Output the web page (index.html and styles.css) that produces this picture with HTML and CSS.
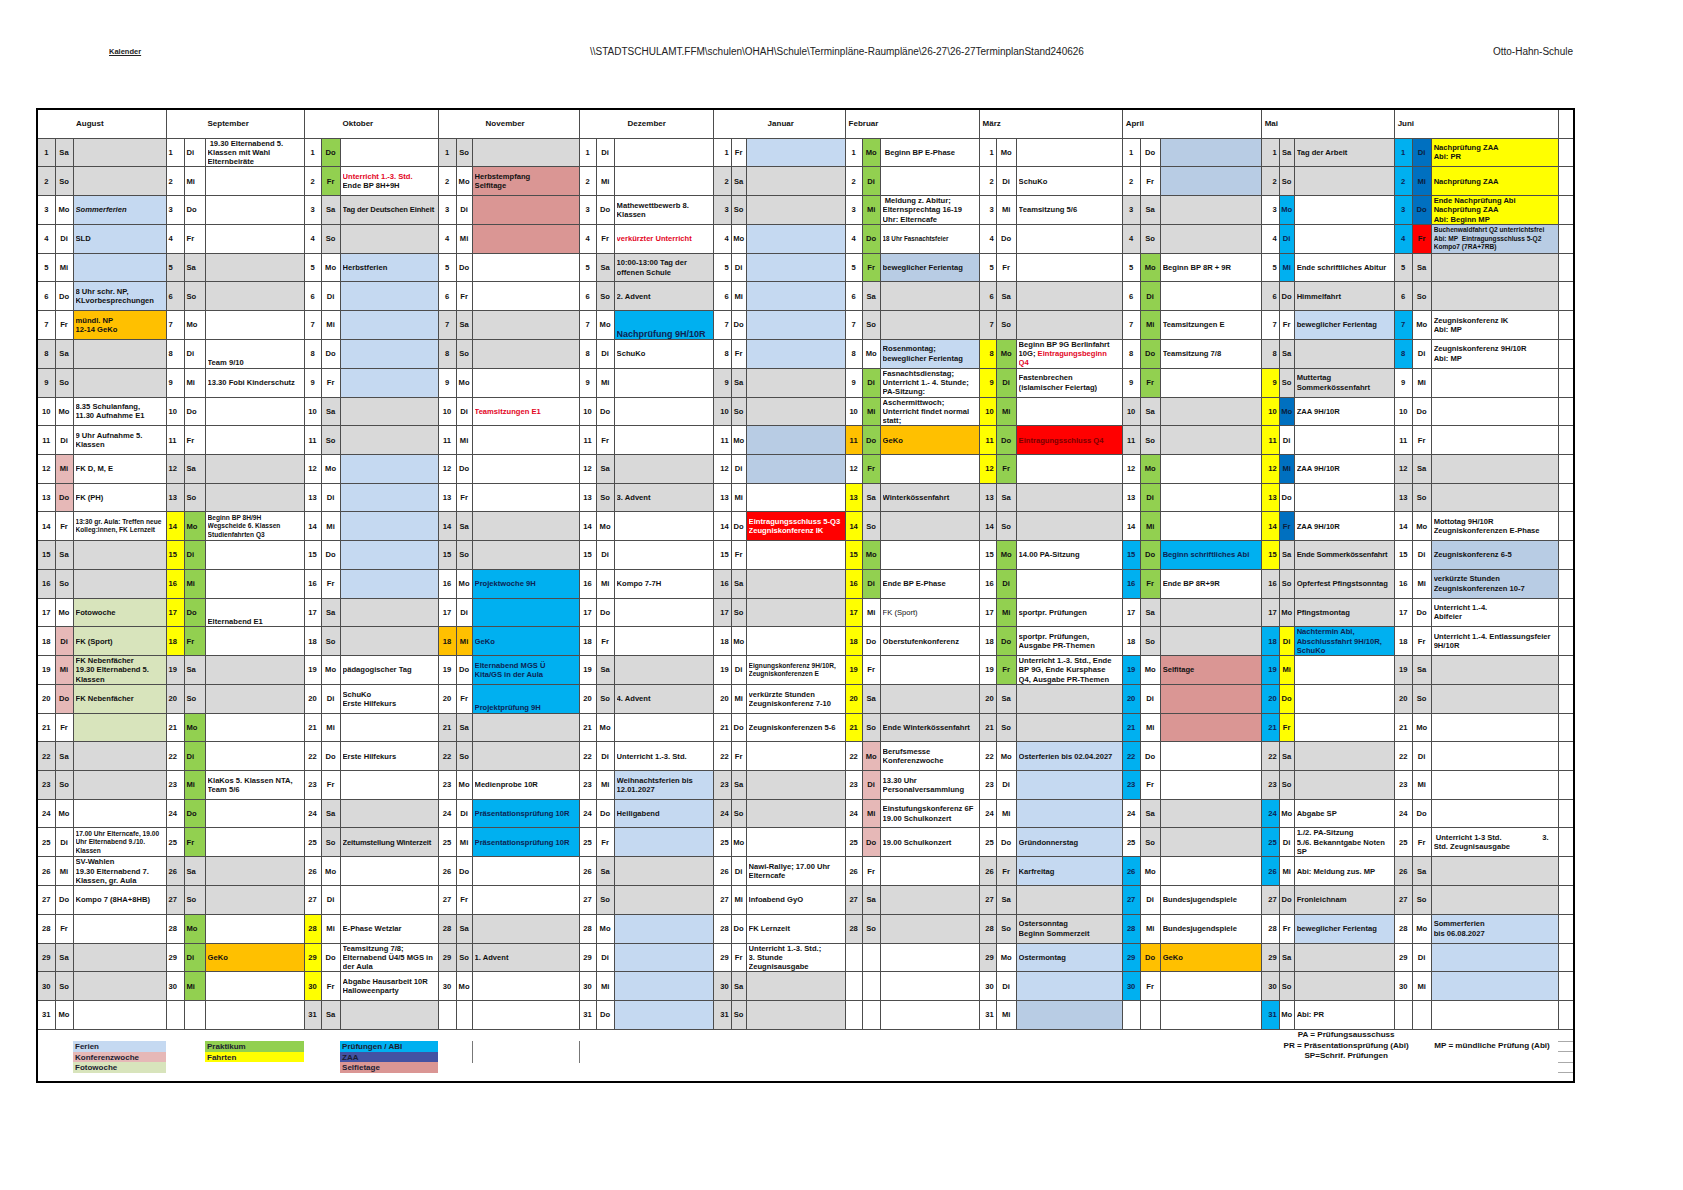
FILE: index.html
```html
<!DOCTYPE html>
<html lang="de">
<head>
<meta charset="utf-8">
<title>Terminplan 26-27</title>
<link rel="stylesheet" href="styles.css">
</head>
<body>
<div class="topbar">
  <div class="kal">Kalender</div>
  <div class="path">\\STADTSCHULAMT.FFM\schulen\OHAH\Schule\Terminpläne-Raumpläne\26-27\26-27TerminplanStand240626</div>
  <div class="school">Otto-Hahn-Schule</div>
</div>
<table class="cal" id="cal">
  <tfoot>
    <tr class="leg">
      <td colspan="2"></td>
      <td><div class="legstack"><div class="legitem bg-ferien">Ferien</div><div class="legitem bg-konf">Konferenzwoche</div><div class="legitem bg-foto">Fotowoche</div></div></td>
      <td colspan="2"></td>
      <td><div class="legstack"><div class="legitem bg-prakt">Praktikum</div><div class="legitem bg-fahrt">Fahrten</div></div></td>
      <td colspan="2"></td>
      <td><div class="legstack"><div class="legitem bg-pruef">Prüfungen / ABI</div><div class="legitem bg-zaaleg">ZAA</div><div class="legitem bg-selfie">Selfietage</div></div></td>
      <td colspan="2"></td>
      <td><div class="vline"></div></td>
      <td><div class="vline"></div></td>
      <td colspan="14"></td>
      <td colspan="5"><div class="notes">PA = Prüfungsausschuss<br>PR = Präsentationsprüfung (Abi)<br>SP=Schrif. Prüfungen</div></td>
      <td><div class="mp">MP = mündliche Prüfung (Abi)</div></td>
      <td><div class="ticks"><div class="tick first"></div><div class="tick"></div><div class="tick"></div><div class="tick"></div></div></td>
    </tr>
  </tfoot>
</table>
<script>
const DAYS = ["So", "Mo", "Di", "Mi", "Do", "Fr", "Sa"];
const BG = {
  W: "bg-white", G: "bg-wkend", B: "bg-ferien", b: "bg-steel", P: "bg-konf",
  S: "bg-selfie", g: "bg-prakt", Y: "bg-fahrt", O: "bg-geko", C: "bg-pruef",
  Z: "bg-zaa", R: "bg-red", F: "bg-foto"
};

const M = [
  { n: "August", y: 2026, m: 7, w: [18, 18, 93], na: "c", da: "c", hp: 38,
    num: "GGWWWWW|GGWWWWW|GGWWWWW|GGWWWWW|GGW",
    day: "GGWWWWW|GGWWPPW|GGWPPPW|GGWWWWW|GGW",
    txt: "GGBBBBO|GGWWWWW|GGFFFFF|GGWWWWW|GGW",
    t: {
      3: ["Sommerferien", "it"], 4: ["SLD"],
      6: ["8 Uhr schr. NP,<br>KLvorbesprechungen"],
      7: ["mündl. NP<br>12-14 GeKo"],
      10: ["8.35 Schulanfang,<br>11.30 Aufnahme E1"],
      11: ["9 Uhr Aufnahme 5.<br>Klassen"],
      12: ["FK D, M, E"], 13: ["FK (PH)"],
      14: ["13:30 gr. Aula: Treffen neue<br>Kolleg:innen, FK Lernzeit", "sm"],
      17: ["Fotowoche"], 18: ["FK (Sport)"],
      19: ["FK Nebenfächer<br>19.30 Elternabend 5.<br>Klassen"],
      20: ["FK Nebenfächer"],
      25: ["17.00 Uhr Elterncafe, 19.00<br>Uhr Elternabend 9./10.<br>Klassen", "sm"],
      26: ["SV-Wahlen<br>19.30 Elternabend 7.<br>Klassen, gr. Aula"],
      27: ["Kompo 7 (8HA+8HB)"]
    } },
  { n: "September", y: 2026, m: 8, w: [18, 21, 99], na: "l", da: "l", hp: 41,
    num: "WWWWGGW|WWWWGGY|YYYYGGW|WWWWGGW|WWW",
    day: "WWWWGGW|WWWWGGg|ggggGGg|ggggGGg|ggW",
    txt: "WWWWGGW|WWWWGGW|WWWWGGW|WWWWGGW|OWW",
    t: {
      1: ["&nbsp;19.30 Elternabend 5.<br>Klassen mit Wahl<br>Elternbeiräte"],
      8: ["Team 9/10", "bot"],
      9: ["13.30 Fobi Kinderschutz"],
      14: ["Beginn BP 8H/9H<br>Wegscheide 6. Klassen<br>Studienfahrten Q3", "sm"],
      17: ["Elternabend E1", "bot"],
      23: ["KlaKos 5. Klassen NTA,<br>Team 5/6"],
      29: ["GeKo"]
    } },
  { n: "Oktober", y: 2026, m: 9, w: [17, 19, 98], na: "c", da: "c", hp: 38,
    num: "WWWWWWW|WWWWWWW|WWWWWWW|WWWWWWY|YYG",
    day: "ggGGWWW|WWGGWWW|WWGGWWW|WWGGWWW|WWG",
    txt: "WWGGBBB|BBGGBBB|BBGGWWW|WWGGWWW|WWG",
    t: {
      2: ['<span class="red">Unterricht 1.-3. Std.</span><br>Ende BP 8H+9H'],
      3: ["Tag der Deutschen Einheit", "tight"],
      5: ["Herbstferien"],
      19: ["pädagogischer Tag"],
      20: ["SchuKo<br>Erste Hilfekurs"],
      22: ["Erste Hilfekurs"],
      25: ["Zeitumstellung Winterzeit", "tight"],
      28: ["E-Phase Wetzlar"],
      29: ["Teamsitzung 7/8;<br>Elternabend Ü4/5 MGS in<br>der Aula"],
      30: ["Abgabe Hausarbeit 10R<br>Halloweenparty"]
    } },
  { n: "November", y: 2026, m: 10, w: [18, 16, 107], na: "c", da: "c", hp: 47,
    num: "GWWWWWG|GWWWWWG|GWWOWWG|GWWWWWG|GWW",
    day: "GWWWWWG|GWWWWWG|GWWOWWG|GWWWWWG|GWW",
    txt: "GSSSWWG|GWWWWWG|GCCCCCG|GWCCWWG|GWW",
    t: {
      2: ["Herbstempfang<br>Selfitage"],
      10: ["Teamsitzungen E1", "rd"],
      16: ["Projektwoche 9H"],
      18: ["GeKo"],
      19: ["Elternabend MGS Ü<br>Kita/GS in der Aula"],
      20: ["Projektprüfung 9H", "bot"],
      23: ["Medienprobe 10R"],
      24: ["Präsentationsprüfung 10R"],
      25: ["Präsentationsprüfung 10R"],
      29: ["1. Advent"]
    } },
  { n: "Dezember", y: 2026, m: 11, w: [17, 18, 99], na: "c", da: "c", hp: 48,
    num: "WWWWWWW|WWWWWWW|WWWWWWW|WWWWWWW|WWW",
    day: "WWWWGGW|WWWWGGW|WWWWGGW|WWWWGGW|WWW",
    txt: "WWWWGGC|WWWWGGW|WWWWGGW|WBBBGGB|BBB",
    t: {
      3: ["Mathewettbewerb 8.<br>Klassen"],
      4: ["verkürzter Unterricht", "rd"],
      5: ["10:00-13:00 Tag der<br>offenen Schule"],
      6: ["2. Advent"],
      7: ["Nachprüfung 9H/10R", "bot lg"],
      8: ["SchuKo"],
      13: ["3. Advent"],
      16: ["Kompo 7-7H"],
      20: ["4. Advent"],
      22: ["Unterricht 1.-3. Std."],
      23: ["Weihnachtsferien bis<br>12.01.2027"],
      24: ["Heiligabend"]
    } },
  { n: "Januar", y: 2027, m: 0, w: [18, 15, 99], na: "r", da: "c", hp: 54,
    num: "WGGWWWW|WGGWWWW|WGGWWWW|WGGWWWW|WGG",
    day: "WGGWWWW|WGGWWWW|WGGWWWW|WGGWWWW|WGG",
    txt: "BGGBBBB|BGGbbWR|WGGWWWW|WGGWWWW|WGG",
    t: {
      14: ["Eintragungsschluss 5-Q3<br>Zeugniskonferenz IK", "wt"],
      19: ["Eignungskonferenz 9H/10R,<br>Zeugniskonferenzen E", "sm"],
      20: ["verkürzte Stunden<br>Zeugniskonferenz 7-10"],
      21: ["Zeugniskonferenzen 5-6"],
      26: ["Nawi-Rallye; 17.00 Uhr<br>Elterncafe"],
      27: ["Infoabend GyO"],
      28: ["FK Lernzeit"],
      29: ["Unterricht 1.-3. Std.;<br>3. Stunde<br>Zeugnisausgabe"]
    } },
  { n: "Februar", y: 2027, m: 1, w: [17, 18, 99], na: "c", da: "c", hp: 3,
    num: "WWWWWWW|WWWOWYY|YYYYYYY|WWWWWGG|WWW",
    day: "gggggGG|WggggGG|ggWWWGG|PPPPWGG|WWW",
    txt: "WWWWbGG|BWWOWGG|WWWWWGG|WWWWWGG|WWW",
    t: {
      1: ["&nbsp;Beginn BP E-Phase"],
      3: ["&nbsp;Meldung z. Abitur;<br>Elternsprechtag 16-19<br>Uhr: Elterncafe"],
      4: ["18 Uhr Fasnachtsfeier", "xs"],
      5: ["beweglicher Ferientag"],
      8: ["Rosenmontag;<br>beweglicher Ferientag"],
      9: ["Fasnachtsdienstag;<br>Unterricht 1.- 4. Stunde;<br>PA-Sitzung:"],
      10: ["Aschermittwoch;<br>Unterricht findet normal<br>statt;"],
      11: ["GeKo"],
      13: ["Winterkössenfahrt"],
      16: ["Ende BP E-Phase"],
      17: ["FK (Sport)", "nb"],
      18: ["Oberstufenkonferenz"],
      21: ["Ende Winterkössenfahrt"],
      22: ["Berufsmesse<br>Konferenzwoche"],
      23: ["13.30 Uhr<br>Personalversammlung"],
      24: ["Einstufungskonferenz 6F<br>19.00 Schulkonzert"],
      25: ["19.00 Schulkonzert"]
    } },
  { n: "März", y: 2027, m: 2, w: [17, 20, 106], na: "r", da: "c", hp: 3,
    num: "WWWWWGG|YYYYYGG|WWWWWGG|WWWWGGG|GWW",
    day: "WWWWWGG|gggggGG|gggggGG|WWWWGGG|WWW",
    txt: "WWWWWGG|WWWRWGG|WWWWWGG|BBBBBGG|BBb",
    t: {
      2: ["SchuKo"],
      3: ["Teamsitzung 5/6"],
      8: ['Beginn BP 9G Berlinfahrt<br>10G; <span class="red">Eintragungsbeginn</span><br><span class="red">Q4</span>'],
      9: ["Fastenbrechen<br>(islamischer Feiertag)"],
      11: ["Eintragungsschluss Q4", "dr"],
      15: ["14.00 PA-Sitzung"],
      17: ["sportpr. Prüfungen"],
      18: ["sportpr. Prüfungen,<br>Ausgabe PR-Themen"],
      19: ["Unterricht 1.-3. Std., Ende<br>BP 9G, Ende Kursphase<br>Q4, Ausgabe PR-Themen"],
      22: ["Osterferien bis 02.04.2027"],
      25: ["Gründonnerstag"],
      26: ["Karfreitag"],
      28: ["Ostersonntag<br>Beginn Sommerzeit"],
      29: ["Ostermontag"]
    } },
  { n: "April", y: 2027, m: 3, w: [18, 20, 101], na: "c", da: "c", hp: 3,
    num: "WWGGWWW|WWGGWWW|CCWWCCC|CCWWCCC|CCW",
    day: "WWGGggg|ggGGggg|ggGGWWW|WWGGWWW|OWW",
    txt: "bbGGWWW|WWGGWWW|CWGGSSS|WWGGWWW|OWW",
    t: {
      5: ["Beginn BP 8R + 9R"],
      7: ["Teamsitzungen E"],
      8: ["Teamsitzung 7/8"],
      15: ["Beginn schriftliches Abi"],
      16: ["Ende BP 8R+9R"],
      19: ["Selfitage"],
      27: ["Bundesjugendspiele"],
      28: ["Bundesjugendspiele"],
      29: ["GeKo"]
    } },
  { n: "Mai", y: 2027, m: 4, w: [18, 15, 100], na: "r", da: "c", hp: 3,
    num: "GGWWWGW|GYYYYYY|YGGCCCC|GGCCCGW|GGC",
    day: "GGCCCGW|GGZWZWZ|GGGYYYY|GGWWWGW|GGW",
    txt: "GGWWWGB|GGWWWWW|GGGCWWW|GGWWWGB|GGW",
    t: {
      1: ["Tag der Arbeit"],
      5: ["Ende schriftliches Abitur"],
      6: ["Himmelfahrt"],
      7: ["beweglicher Ferientag"],
      9: ["Muttertag<br>Sommerkössenfahrt"],
      10: ["ZAA 9H/10R"], 12: ["ZAA 9H/10R"], 14: ["ZAA 9H/10R"],
      15: ["Ende Sommerkössenfahrt", "tight"],
      16: ["Opferfest Pfingstsonntag"],
      17: ["Pfingstmontag"],
      18: ["Nachtermin Abi,<br>Abschlussfahrt 9H/10R,<br>SchuKo"],
      24: ["Abgabe SP"],
      25: ["1./2. PA-Sitzung<br>5./6. Bekanntgabe Noten<br>SP"],
      26: ["Abi: Meldung zus. MP"],
      27: ["Fronleichnam"],
      28: ["beweglicher Ferientag"],
      31: ["Abi: PR"]
    } },
  { n: "Juni", y: 2027, m: 5, w: [18, 19, 127], na: "c", da: "c", hp: 3,
    num: "CCCCGGC|CWWWGGW|WWWWGGW|WWWWGGW|WWW",
    day: "ZZZRGGW|WWWWGGW|WWWWGGW|WWWWGGW|WWW",
    txt: "YYYbGGW|WWWWGGW|bbWWGGW|WWWWGGB|BBW",
    t: {
      1: ["Nachprüfung ZAA<br>Abi: PR"],
      2: ["Nachprüfung ZAA"],
      3: ["Ende Nachprüfung Abi<br>Nachprüfung ZAA<br>Abi: Beginn MP"],
      4: ["Buchenwaldfahrt Q2 unterrichtsfrei<br>Abi: MP&nbsp; Eintragungsschluss 5-Q2<br>Kompo7 (7RA+7RB)", "sm"],
      7: ["Zeugniskonferenz IK<br>Abi: MP"],
      8: ["Zeugniskonferenz 9H/10R<br>Abi: MP"],
      14: ["Mottotag 9H/10R<br>Zeugniskonferenzen E-Phase"],
      15: ["Zeugniskonferenz 6-5"],
      16: ["verkürzte Stunden<br>Zeugniskonferenzen 10-7"],
      17: ["Unterricht 1.-4.<br>Abifeier"],
      18: ["Unterricht 1.-4. Entlassungsfeier<br>9H/10R"],
      25: ['<div class="split"><span>&nbsp;Unterricht 1-3 Std.</span><span>3.</span></div>Std. Zeugnisausgabe'],
      28: ["Sommerferien<br>bis 06.08.2027"]
    } }
];

(function build() {
  const tbl = document.getElementById("cal");
  const clean = s => s.replace(/\|/g, "");
  M.forEach(mo => { mo.num = clean(mo.num); mo.day = clean(mo.day); mo.txt = clean(mo.txt); });

  const cg = document.createElement("colgroup");
  M.forEach(mo => mo.w.forEach(w => {
    const c = document.createElement("col");
    c.style.width = w + "px";
    cg.appendChild(c);
  }));
  const ce = document.createElement("col");
  ce.style.width = "16px";
  cg.appendChild(ce);
  tbl.insertBefore(cg, tbl.firstChild);

  const thead = document.createElement("thead");
  const hr = document.createElement("tr");
  M.forEach(mo => {
    const th = document.createElement("th");
    th.colSpan = 3;
    th.className = "mhead";
    th.style.paddingLeft = mo.hp + "px";
    th.textContent = mo.n;
    hr.appendChild(th);
  });
  hr.appendChild(document.createElement("th"));
  thead.appendChild(hr);
  tbl.insertBefore(thead, cg.nextSibling);

  const tbody = document.createElement("tbody");
  for (let d = 1; d <= 31; d++) {
    const tr = document.createElement("tr");
    M.forEach(mo => {
      const dt = new Date(mo.y, mo.m, d);
      const valid = dt.getMonth() === mo.m;
      const i = d - 1;

      const tn = document.createElement("td");
      tn.className = "num al-" + mo.na + " " + BG[mo.num[i]];
      tn.textContent = valid ? String(d) : "";
      tr.appendChild(tn);

      const td = document.createElement("td");
      td.className = "day al-" + mo.da + " " + BG[mo.day[i]];
      td.textContent = valid ? DAYS[dt.getDay()] : "";
      tr.appendChild(td);

      const tt = document.createElement("td");
      const entry = mo.t[d];
      let cls = "txt " + BG[mo.txt[i]];
      if (entry && entry[1]) cls += " " + entry[1].split(" ").map(f => "f-" + f).join(" ");
      tt.className = cls;
      const div = document.createElement("div");
      div.className = "tx";
      if (entry) div.innerHTML = entry[0];
      tt.appendChild(div);
      tr.appendChild(tt);
    });
    const te = document.createElement("td");
    te.className = "extra bg-white";
    tr.appendChild(te);
    tbody.appendChild(tr);
  }
  tbl.insertBefore(tbody, thead.nextSibling);
})();
</script>
</body>
</html>
```

FILE: styles.css
```css
* { box-sizing: border-box; }
body {
  margin: 0;
  background: #fff;
  font-family: "Liberation Sans", Arial, sans-serif;
  color: #111;
}
.topbar {
  display: flex;
  align-items: center;
  width: 1537px;
  height: 12px;
  margin: 45px 0 0 36px;
}
.kal {
  width: 554px;
  padding-left: 73px;
  font-size: 7.5px;
  font-weight: 700;
  text-decoration: underline;
  color: #222;
}
.path { font-size: 10px; color: #222; white-space: nowrap; }
.school { margin-left: auto; font-size: 10px; color: #222; }

.cal {
  margin: 51px 0 0 36px;
  width: 1537px;
  table-layout: fixed;
  border-collapse: collapse;
  border: 2px solid #000;
}
.cal th, .cal td {
  border: 1px solid #4d4d4d;
  padding: 0;
  font-size: 7.6px;
  font-weight: 700;
  line-height: 9.3px;
  white-space: nowrap;
  overflow: hidden;
  vertical-align: middle;
}
.cal thead th {
  height: 29px;
  font-size: 8px;
  text-align: left;
}
.cal tbody tr { height: 28.7px; }

.al-c { text-align: center; }
.al-l { text-align: left; padding-left: 2px !important; }
.al-r { text-align: right; padding-right: 2px !important; }
.txt { padding-left: 2px !important; padding-right: 0 !important; }
.tx { max-height: 28px; overflow: hidden; }

.bg-white { background: #fff; }
.bg-wkend { background: #d9d9d9; }
.bg-ferien { background: #c5d9f1; }
.bg-steel { background: #b8cce4; }
.bg-konf { background: #e6b8b7; }
.bg-selfie { background: #da9694; }
.bg-prakt { background: #92d050; }
.bg-fahrt { background: #ffff00; }
.bg-geko { background: #ffc000; }
.bg-pruef { background: #00b0f0; }
.bg-zaa { background: #0070c0; }
.bg-zaaleg { background: #4352a3; }
.bg-red { background: #ff0000; }
.bg-foto { background: #d8e4bc; }

.cal td.bg-pruef { color: #0d2454; }
.cal td.bg-zaa { color: #0b1d3d; }

.f-it { font-style: italic; }
.f-sm { font-size: 6.6px !important; line-height: 8.5px !important; }
.f-xs { font-size: 6.3px !important; }
.f-lg { font-size: 9px !important; line-height: 9px !important; }
.f-bot { vertical-align: bottom !important; }
.f-rd { color: #e3061f; }
.f-wt { color: #fff; }
.f-dr { color: #7a0000; }
.f-nb { font-weight: 400 !important; }
.f-tight { letter-spacing: -0.15px; }
.red { color: #e3061f; }
.split { display: flex; justify-content: space-between; padding-right: 9px; }

.cal tr.leg td {
  border-style: none;
  vertical-align: top;
  height: 53px;
}
.legstack { padding-top: 11px; }
.legitem {
  height: 10.7px;
  line-height: 11px;
  font-size: 8px;
  font-weight: 700;
  padding-left: 2px;
  color: #1c1c30;
}
.vline { margin-top: 11px; height: 22px; border-left: 1px solid #777; }
.notes {
  text-align: center;
  font-size: 8.1px;
  line-height: 10.5px;
  padding-top: 0.5px;
}
.mp {
  padding: 11px 0 0 3px;
  font-size: 8.1px;
  line-height: 10.5px;
}
.tick { height: 10.5px; border-bottom: 1px solid #aaa; }
.tick.first { height: 12px; }
```
